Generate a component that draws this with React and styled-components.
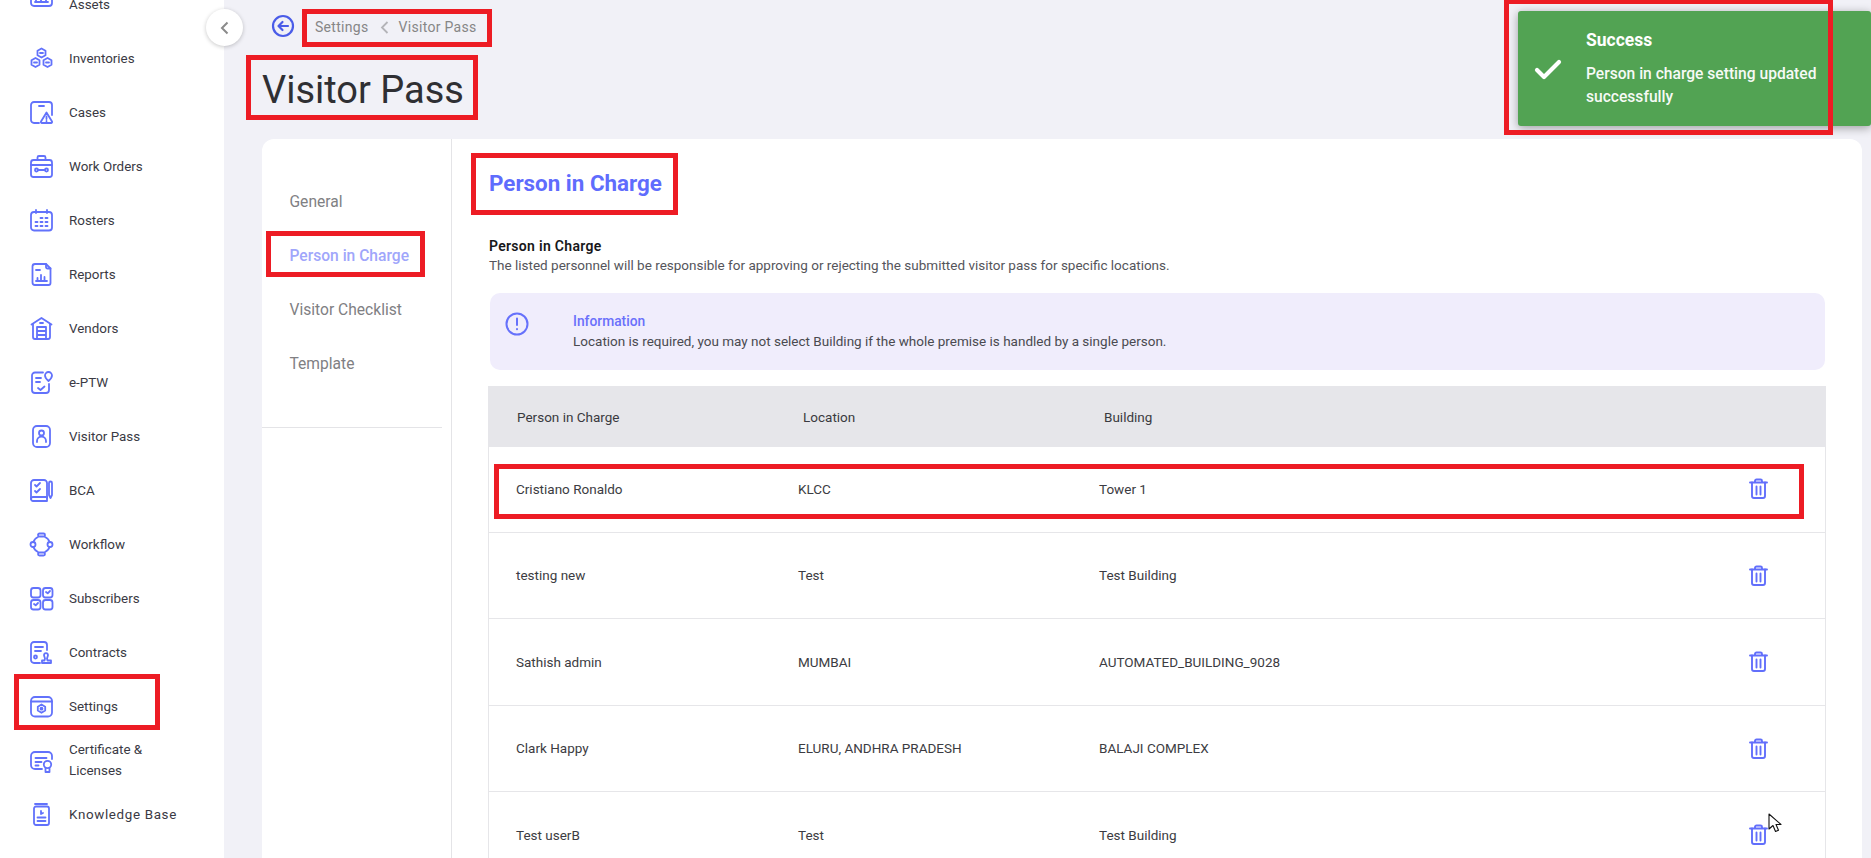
import styled, { createGlobalStyle } from "styled-components";

const Global = createGlobalStyle`
  html, body {
    margin: 0;
    padding: 0;
    background: #f1f1f7;
    font-family: Roboto, "Liberation Sans", sans-serif;
  }
`;

const Page = styled.div`
  position: relative;
  display: flex;
  height: 100vh;
  overflow: hidden;
  background: #f1f1f7;
`;

const Sidebar = styled.nav`
  flex: 0 0 224px;
  background: #fff;
  overflow: hidden;
`;

const NavList = styled.ul`
  list-style: none;
  margin: -23px 0 0;
  padding: 0;
`;

const NavItem = styled.li`
  height: 54px;
  display: flex;
  align-items: center;
  padding-left: 29px;
  gap: 15px;
  font-size: 13.4px;
  line-height: 21px;
  color: #3a3a44;
  letter-spacing: ${(p) => (p.$wide ? "0.65px" : "0")};
  svg {
    flex: none;
    width: 25px;
    height: 25px;
    fill: none;
    stroke: #6272fb;
    stroke-width: 1.8;
    stroke-linecap: round;
    stroke-linejoin: round;
  }
`;

const NavLabel = styled.span`
  max-width: 120px;
`;

const CollapseButton = styled.button`
  position: absolute;
  top: 9px;
  left: 206px;
  width: 37px;
  height: 37px;
  padding: 0;
  display: flex;
  align-items: center;
  justify-content: center;
  border: 0;
  border-radius: 50%;
  background: #fff;
  box-shadow: 0 1px 4px rgba(0, 0, 0, 0.22);
  svg {
    width: 12px;
    height: 14px;
    fill: none;
    stroke: #8a8a8a;
    stroke-width: 2;
  }
`;

const Main = styled.main`
  flex: 1;
  min-width: 0;
  padding: 0 9px 0 38px;
  display: flex;
  flex-direction: column;
`;

const Crumbs = styled.div`
  flex: none;
  height: 54px;
  display: flex;
  align-items: center;
  padding-left: 9px;
  font-size: 14px;
  letter-spacing: 0.3px;
  color: #868686;
`;

const BackIcon = styled.svg`
  width: 24px;
  height: 24px;
  margin: -2px 20px 0 0;
  fill: none;
  stroke: #4a5ce8;
  stroke-width: 2.2;
  stroke-linecap: round;
  stroke-linejoin: round;
`;

const CrumbArrow = styled.svg`
  width: 10px;
  height: 13px;
  margin: 0 9px 0 11px;
  fill: none;
  stroke: #b4b4b8;
  stroke-width: 1.8;
`;

const Title = styled.h1`
  flex: none;
  margin: 14px 0 0;
  font-size: 38px;
  line-height: 44px;
  font-weight: 400;
  color: #2f2f33;
`;

const Card = styled.section`
  flex: 1;
  min-height: 0;
  margin-top: 27px;
  display: flex;
  background: #fff;
  border-radius: 12px 12px 0 0;
`;

const TabColumn = styled.div`
  flex: 0 0 190px;
  box-sizing: border-box;
  padding-top: 36px;
  border-right: 1px solid #e4e4e7;
`;

const Tab = styled.div`
  height: 54px;
  display: flex;
  align-items: center;
  padding-left: 27.5px;
  font-size: 15.6px;
  color: ${(p) => (p.$active ? "#a0a6fb" : "#808083")};
  font-weight: ${(p) => (p.$active ? 500 : 400)};
`;

const TabRule = styled.hr`
  margin: 36px 9px 0 0;
  border: 0;
  border-top: 1px solid #e4e4e7;
`;

const Content = styled.div`
  flex: 1;
  min-width: 0;
  padding: 28px 36px 0 37px;
`;

const Heading = styled.h2`
  margin: 0;
  font-size: 22.4px;
  line-height: 32px;
  font-weight: 700;
  color: #5f6cfd;
`;

const SubHeading = styled.h3`
  margin: 38px 0 0;
  font-size: 14px;
  line-height: 19px;
  font-weight: 600;
  letter-spacing: 0.3px;
  color: #17171a;
`;

const Description = styled.p`
  margin: 0;
  font-size: 13.5px;
  line-height: 19px;
  color: #55555b;
`;

const InfoBox = styled.div`
  margin: 18px 1px 0 1px;
  height: 77px;
  box-sizing: border-box;
  padding: 18px 14px;
  display: flex;
  border-radius: 10px;
  background: #f0edfc;
`;

const InfoIcon = styled.svg`
  flex: none;
  width: 26px;
  height: 26px;
  margin: 0 43px 0 0;
  fill: none;
  stroke: #6671fb;
  stroke-width: 2;
  stroke-linecap: round;
`;

const InfoTitle = styled.div`
  font-size: 13.8px;
  line-height: 20px;
  font-weight: 500;
  color: #6a70fb;
`;

const InfoText = styled.div`
  font-size: 13.5px;
  line-height: 20px;
  color: #4a4a50;
`;

const TableHead = styled.div`
  margin: 16px 0 0 -1px;
  height: 61px;
  padding-left: 29px;
  display: grid;
  grid-template-columns: 286px 301px 1fr;
  align-items: center;
  background: #e6e6ea;
  font-size: 13.5px;
  color: #3a3a40;
`;

const TableBody = styled.div`
  margin: -1px 0 0 -1px;
  border-left: 1px solid #e6e6e9;
  border-right: 1px solid #e6e6e9;
`;

const Row = styled.div`
  height: 86.5px;
  box-sizing: border-box;
  padding-left: 27px;
  display: grid;
  grid-template-columns: 282px 301px 1fr 76px;
  align-items: center;
  border-bottom: 1px solid #e6e6e9;
  font-size: 13.5px;
  color: #3c3c42;
`;

const TrashIcon = styled.svg`
  width: 19px;
  height: 21px;
  fill: none;
  stroke: #626ffb;
  stroke-width: 1.9;
  stroke-linecap: round;
  stroke-linejoin: round;
`;

const Toast = styled.div`
  position: absolute;
  top: 11px;
  left: 1518px;
  right: 0;
  height: 115px;
  display: flex;
  align-items: center;
  border-radius: 3px;
  background: #52a353;
  box-shadow: 0 2px 10px rgba(0, 0, 0, 0.35);
  color: #fff;
`;

const ToastIcon = styled.svg`
  flex: none;
  width: 30px;
  height: 24px;
  margin: 0 23px 0 15px;
  fill: none;
  stroke: #fff;
  stroke-width: 4.2;
  stroke-linecap: round;
  stroke-linejoin: round;
`;

const ToastBody = styled.div`
  width: 250px;
  padding-top: 2px;
`;

const ToastTitle = styled.div`
  font-size: 17.5px;
  line-height: 20px;
  font-weight: 700;
  margin-bottom: 13px;
`;

const ToastText = styled.div`
  font-size: 15.6px;
  line-height: 23px;
  font-weight: 500;
  opacity: 0.95;
`;

/* red review marks drawn over the capture */
const Mark = styled.div`
  position: absolute;
  left: ${(p) => p.$x}px;
  top: ${(p) => p.$y}px;
  width: ${(p) => p.$w}px;
  height: ${(p) => p.$h}px;
  box-sizing: border-box;
  border: 5px solid #ed1c24;
  pointer-events: none;
`;

const Cursor = styled.svg`
  position: absolute;
  left: 1768px;
  top: 813px;
  width: 14px;
  height: 21px;
`;

const icons = {
  assets: (
    <>
      <rect x="2" y="-8" width="21" height="22" rx="3" />
      <path d="M6 10h13M7 7v3M12 6v4M17 7v3" />
    </>
  ),
  inventories: (
    <>
      <path d="M12.5 2.5l4 2.2v4.6l-4 2.2-4-2.2V4.7z" />
      <path d="M6.5 12l4 2.2v4.6l-4 2.2-4-2.2v-4.6z" />
      <path d="M18.5 12l4 2.2v4.6l-4 2.2-4-2.2v-4.6z" />
      <path d="M11 7h3M5 16.500h3M17 16.500h3" />
    </>
  ),
  cases: (
    <>
      <path d="M10 23H5a3 3 0 0 1-3-3V5a3 3 0 0 1 3-3h15a3 3 0 0 1 3 3v10" />
      <path d="M10 6h5" />
      <path d="M17.500 12.500l5.500 9a1 1 0 0 1-1 1.500H13a1 1 0 0 1-1-1.500z" />
      <path d="M17.500 16.500v2.500M17.500 21v.2" />
    </>
  ),
  workOrders: (
    <>
      <rect x="2" y="6" width="21" height="17" rx="2.500" />
      <path d="M8.500 6V3.500a1.500 1.500 0 0 1 1.500-1.500h5a1.500 1.500 0 0 1 1.500 1.500V6M2 11h21" />
      <circle cx="7.500" cy="16" r="1.500" />
      <circle cx="17.500" cy="16" r="1.500" />
      <path d="M9 16h7" />
    </>
  ),
  rosters: (
    <>
      <rect x="2" y="4" width="21" height="18.500" rx="3" />
      <path d="M7 2v3M18 2v3M6.500 18h2M11.500 18h2M16.500 18h2M11.500 14h2M16.500 14h2M11.500 10h2M16.500 10h2M6.500 14h2" />
    </>
  ),
  reports: (
    <>
      <path d="M17 2H6a2.500 2.500 0 0 0-2.500 2.500v16A2.500 2.500 0 0 0 6 23h13.500a2 2 0 0 0 2-2V6.500z" />
      <path d="M17 2v3a1.500 1.500 0 0 0 1.500 1.500h3" />
      <path d="M7 8h4M7 19h11M8.500 19v-3M12 19v-6M15.500 19v-4" />
    </>
  ),
  vendors: (
    <>
      <path d="M2.500 8.500L12.500 2l10 6.500" />
      <path d="M4 8v13a2 2 0 0 0 2 2h13a2 2 0 0 0 2-2V8" />
      <path d="M8 23V11h9v12M8 15h9M8 19h9M11 7h3" />
    </>
  ),
  eptw: (
    <>
      <path d="M14 2.500H6a3 3 0 0 0-3 3V20a3 3 0 0 0 3 3h11a3 3 0 0 0 3-3v-6" />
      <path d="M7 8h5M7 12h4" />
      <path d="M9 18l2.500 2 4-3.500" />
      <path d="M19.500 2a3.500 3.500 0 0 1 3.500 3.500c0 2.500-3.500 5.500-3.500 5.500S16 8 16 5.500A3.500 3.500 0 0 1 19.500 2z" />
    </>
  ),
  visitor: (
    <>
      <rect x="4" y="2" width="17" height="21" rx="4" />
      <circle cx="12.500" cy="9" r="2.500" />
      <path d="M8 18v-1a4.500 4.500 0 0 1 9 0v1" />
    </>
  ),
  bca: (
    <>
      <path d="M18 20V5a3 3 0 0 0-3-3H5a3 3 0 0 0-3 3v16" />
      <path d="M2 21a2 2 0 0 1 2-2h14v4H4a2 2 0 0 1-2-2z" />
      <path d="M6 7l1.500 1.500L11 5M6 13l1.500 1.500L11 11" />
      <path d="M20 5a1.500 1.500 0 0 1 3 0v12l-1.500 3-1.500-3z" />
    </>
  ),
  workflow: (
    <>
      <rect x="9" y="1.500" width="7" height="3" rx="1.500" />
      <rect x="9" y="20.500" width="7" height="3" rx="1.500" />
      <circle cx="4" cy="12.500" r="2.500" />
      <circle cx="21" cy="12.500" r="2.500" />
      <path d="M9 5Q5.500 6.500 4.500 10M16 5q3.500 1.500 4.500 5M4.500 15Q5.500 18.500 9 20M20.500 15q-1 3.500-4.500 5" />
    </>
  ),
  subscribers: (
    <>
      <rect x="2" y="2" width="9.500" height="9.500" rx="2.500" />
      <rect x="14" y="2" width="9.500" height="9.500" rx="2.500" />
      <rect x="2" y="14" width="9.500" height="9.500" rx="2.500" />
      <rect x="14" y="14" width="9.500" height="9.500" rx="2.500" />
      <path d="M17 6l1.700 1.300L21 5M5 18l1.700 1.300L9 17" />
    </>
  ),
  contracts: (
    <>
      <path d="M11 23H5a3 3 0 0 1-3-3V5a3 3 0 0 1 3-3h10a3 3 0 0 1 3 3v5" />
      <path d="M6 7h8M6 11h6" />
      <circle cx="6.500" cy="17" r="1.500" />
      <path d="M13 23v-2.500h2.500l.5-2-.8-2.500a2 2 0 1 1 3.600 0l-.8 2.500.5 2H22V23z" />
    </>
  ),
  settings: (
    <>
      <rect x="2" y="3" width="21" height="19.500" rx="4" />
      <path d="M2 7.500h21" />
      <path d="M12.500 10.500l3.700 2.200v3.900l-3.700 2.200-3.700-2.200v-3.900z" />
      <circle cx="12.500" cy="14.700" r="1" />
    </>
  ),
  certificate: (
    <>
      <path d="M13 21H6a4 4 0 0 1-4-4V8a4 4 0 0 1 4-4h13a4 4 0 0 1 4 4v3" />
      <path d="M6.500 10h11M6.500 14h6M6.500 17.500h3" />
      <circle cx="18.500" cy="16.500" r="3.700" />
      <path d="M16.500 20.500V24h4v-3.500" />
    </>
  ),
  knowledge: (
    <>
      <path d="M6 2h12" />
      <rect x="5" y="4.500" width="15" height="18.500" rx="2" />
      <path d="M12 9v3l2-1M8.500 15.500h8M8.500 19h8" />
    </>
  ),
};

const navItems = [
  ["assets", "Assets"],
  ["inventories", "Inventories"],
  ["cases", "Cases"],
  ["workOrders", "Work Orders"],
  ["rosters", "Rosters"],
  ["reports", "Reports"],
  ["vendors", "Vendors"],
  ["eptw", "e-PTW"],
  ["visitor", "Visitor Pass"],
  ["bca", "BCA"],
  ["workflow", "Workflow"],
  ["subscribers", "Subscribers"],
  ["contracts", "Contracts"],
  ["settings", "Settings"],
  ["certificate", "Certificate & Licenses"],
  ["knowledge", "Knowledge Base"],
];

const rows = [
  ["Cristiano Ronaldo", "KLCC", "Tower 1"],
  ["testing new", "Test", "Test Building"],
  ["Sathish admin", "MUMBAI", "AUTOMATED_BUILDING_9028"],
  ["Clark Happy", "ELURU, ANDHRA PRADESH", "BALAJI COMPLEX"],
  ["Test userB", "Test", "Test Building"],
];

const marks = [
  [14, 674, 146, 56],
  [302, 9, 190, 38],
  [246, 55, 232, 65],
  [471, 153, 207, 62],
  [266, 231, 159, 46],
  [1504, -1, 329, 136],
  [494, 464, 1310, 55],
];

function Trash() {
  return (
    <TrashIcon viewBox="0 0 19 21">
      <path d="M1 4.500h17M6 4.500V3a1.500 1.500 0 0 1 1.500-1.500h4A1.500 1.500 0 0 1 13 3v1.500" />
      <path d="M3 4.500v13.500a2 2 0 0 0 2 2h9a2 2 0 0 0 2-2V4.500" />
      <path d="M7.500 8.500v8M11.500 8.500v8" />
    </TrashIcon>
  );
}

export default function App() {
  return (
    <Page>
      <Global />
      <Sidebar>
        <NavList>
          {navItems.map(([icon, label]) => (
            <NavItem key={label} $wide={icon === "knowledge"}>
              <svg viewBox="0 0 25 25">{icons[icon]}</svg>
              <NavLabel>{label}</NavLabel>
            </NavItem>
          ))}
        </NavList>
      </Sidebar>
      <CollapseButton>
        <svg viewBox="0 0 12 14">
          <path d="M8.500 1.500L3 7l5.500 5.500" />
        </svg>
      </CollapseButton>
      <Main>
        <Crumbs>
          <BackIcon viewBox="0 0 24 24">
            <circle cx="12" cy="12" r="10" />
            <path d="M17 12H8M11.500 8L7.500 12l4 4" />
          </BackIcon>
          <span>Settings</span>
          <CrumbArrow viewBox="0 0 10 13">
            <path d="M7.500 1L2 6.500 7.500 12" />
          </CrumbArrow>
          <span>Visitor Pass</span>
        </Crumbs>
        <Title>Visitor Pass</Title>
        <Card>
          <TabColumn>
            <Tab>General</Tab>
            <Tab $active>Person in Charge</Tab>
            <Tab>Visitor Checklist</Tab>
            <Tab>Template</Tab>
            <TabRule />
          </TabColumn>
          <Content>
            <Heading>Person in Charge</Heading>
            <SubHeading>Person in Charge</SubHeading>
            <Description>
              The listed personnel will be responsible for approving or rejecting the submitted
              visitor pass for specific locations.
            </Description>
            <InfoBox>
              <InfoIcon viewBox="0 0 26 26">
                <circle cx="13" cy="13" r="10.500" />
                <path d="M13 7.500v6.500M13 18v.3" />
              </InfoIcon>
              <div>
                <InfoTitle>Information</InfoTitle>
                <InfoText>
                  Location is required, you may not select Building if the whole premise is handled
                  by a single person.
                </InfoText>
              </div>
            </InfoBox>
            <TableHead>
              <span>Person in Charge</span>
              <span>Location</span>
              <span>Building</span>
            </TableHead>
            <TableBody>
              {rows.map(([person, location, building]) => (
                <Row key={person}>
                  <span>{person}</span>
                  <span>{location}</span>
                  <span>{building}</span>
                  <Trash />
                </Row>
              ))}
            </TableBody>
          </Content>
        </Card>
      </Main>
      <Toast>
        <ToastIcon viewBox="0 0 30 24">
          <path d="M4 13l7 7L26 5" />
        </ToastIcon>
        <ToastBody>
          <ToastTitle>Success</ToastTitle>
          <ToastText>Person in charge setting updated successfully</ToastText>
        </ToastBody>
      </Toast>
      {marks.map(([x, y, w, h]) => (
        <Mark key={`${x}-${y}`} $x={x} $y={y} $w={w} $h={h} />
      ))}
      <Cursor viewBox="0 0 14 21">
        <path
          d="M1 1v15l4-3.500 2.500 6 3-1.300-2.500-5.700h5z"
          fill="#fff"
          stroke="#111"
          strokeWidth="1.100"
          strokeLinejoin="round"
        />
      </Cursor>
    </Page>
  );
}
